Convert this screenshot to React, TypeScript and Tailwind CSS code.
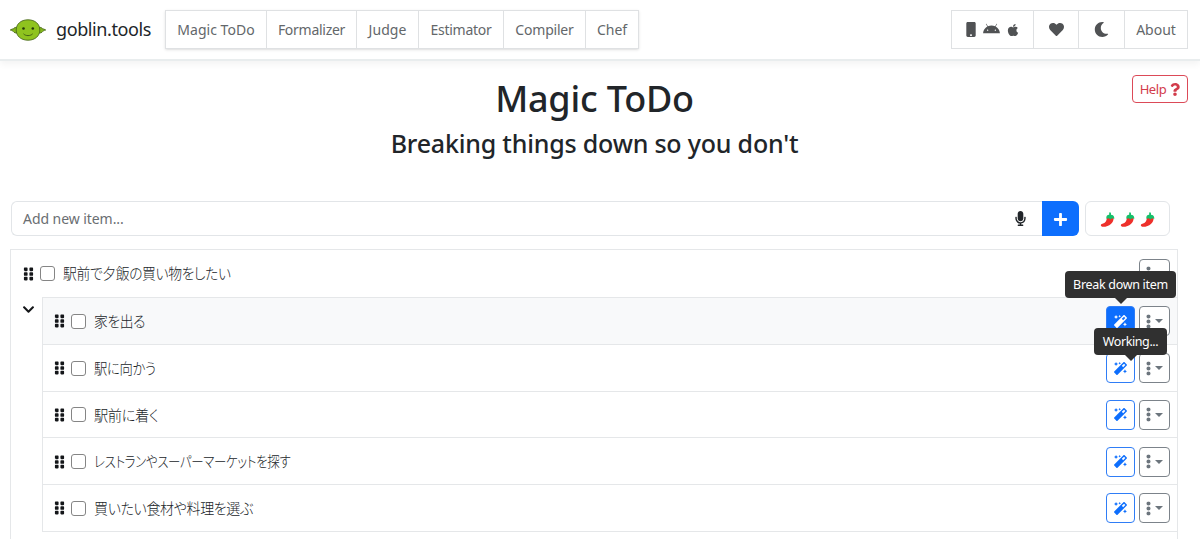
import type { ReactNode } from 'react'
import {
  FaApple,
  FaChevronDown,
  FaEllipsisV,
  FaGripVertical,
  FaHeart,
  FaMagic,
  FaMicrophone,
  FaMobile,
  FaMoon,
  FaPlus,
  FaQuestion
} from 'react-icons/fa'
import { FaAndroid } from 'react-icons/fa6'

const navItems = [
  { label: 'Magic ToDo', width: 'w-[101px]', text: 'tracking-[0.03px]' },
  { label: 'Formalizer', width: 'w-[90px]', text: 'tracking-[-0.27px]' },
  { label: 'Judge', width: 'w-[62px]', text: 'tracking-[0.1px]' },
  { label: 'Estimator', width: 'w-[85px]', text: 'tracking-[-0.27px]' },
  { label: 'Compiler', width: 'w-[82px]', text: 'tracking-[-0.2px]' },
  { label: 'Chef', width: 'w-[52px]', text: 'tracking-[-0.1px]' }
]

const steps = [
  { text: '家を出る', fit: 'scale-x-[0.92]' },
  { text: '駅に向かう', fit: 'scale-x-[0.89]' },
  { text: '駅前に着く', fit: 'scale-x-[0.95]' },
  { text: 'レストランやスーパーマーケットを探す', fit: 'scale-x-[0.83]' },
  { text: '買いたい食材や料理を選ぶ', fit: 'scale-x-[0.935]' }
]

function GoblinLogo() {
  return (
    <svg viewBox="0 0 36 22" className="w-9 h-[22px]" stroke="#4b6a1c" strokeWidth="0.9">
      <path d="M7 9C5.400 8 4.200 8.300 3.900 9.700 2.600 9.900 1.300 10.200.3 11c1.700.4 2.600.9 3.700 2.200 1.200 1 2.600.9 3.600.3z" fill="#83b81a" />
      <path d="M29 9c1.600-1 2.800-.7 3.100.7 1.300.2 2.600.5 3.600 1.300-1.700.4-2.600.9-3.700 2.200-1.200 1-2.600.9-3.600.3z" fill="#83b81a" />
      <path d="M18 .8c7.200 0 11.800 4.300 11.800 10.200S25.200 21.200 18 21.200 6.200 16.900 6.200 11 10.800.8 18 .8z" fill="#8fc31f" />
      <circle cx="13.500" cy="9.500" r="1.300" fill="#26380b" stroke="none" />
      <circle cx="22.800" cy="9.500" r="1.300" fill="#26380b" stroke="none" />
      <path d="M13.500 14.800c2 2.400 7 2.400 9.200 0" fill="none" stroke="#3d5713" />
    </svg>
  )
}

function Pepper() {
  return (
    <svg viewBox="0 0 16 16" className="w-[15px] h-[15px]">
      <path d="M7.400 6h7.100c.3 5.100-4.300 9.700-11.200 9.700-1.400 0-2.400-.6-2.400-1.600 0-.9.700-1.400 1.700-1.600C5.800 11.700 7 9.700 7.400 6z" fill="#ee312b" />
      <path d="M9.700 3c.4-.8.300-1.500-.2-2.100l1.500-.7c.8.900 1 1.900.6 2.800 2.400.1 3.700 1.700 3.700 4.100l-2.300-.5-1.800 1.200-2-1.200-2.400.7C6.400 4.600 7.600 3.100 9.700 3z" fill="#14c06a" />
    </svg>
  )
}

function NavCell({ className, children }: { className: string; children: ReactNode }) {
  return (
    <button
      className={`flex shrink-0 items-center justify-center h-full border-r border-[#dfe1e3] last:border-r-0 text-[#63676a] whitespace-nowrap ${className}`}
    >
      {children}
    </button>
  )
}

function Tooltip({ className, children }: { className: string; children: ReactNode }) {
  return (
    <div className={`absolute z-10 h-[27px] flex items-center justify-center bg-[#303030] rounded text-white text-[12.5px] whitespace-nowrap ${className}`}>
      {children}
      <span className="absolute top-full border-x-[6px] border-t-[6px] border-x-transparent border-t-[#303030]" />
    </div>
  )
}

function MoreButton() {
  return (
    <button className="w-[31px] h-[30px] flex items-center justify-center gap-[4px] bg-white border border-[#7c838a] rounded text-[#6c757d]">
      <FaEllipsisV className="w-[5px] h-[13px] scale-110" />
      <span className="border-x-4 border-t-4 border-x-transparent border-t-[#6c757d]" />
    </button>
  )
}

function ItemLabel({ text, fit }: { text: string; fit: string }) {
  return (
    <>
      <FaGripVertical className="w-[11px] h-[14px] shrink-0 text-[#141619] scale-105" />
      <span className="ml-[6px] w-[15px] h-[15px] shrink-0 bg-white border border-[#858585] rounded-[3px]" />
      <span
        className={`ml-2 text-[15px] text-[#212529] font-light tracking-[-0.4px] origin-left font-['Noto_Sans_CJK_JP',sans-serif] [font-feature-settings:'palt'] whitespace-nowrap ${fit}`}
      >
        {text}
      </span>
    </>
  )
}

export default function App() {
  return (
    <div className="w-full h-[539px] overflow-hidden bg-white text-[#212529] font-['Noto_Sans','Open_Sans',sans-serif]">
      {/* Navbar */}
      <header className="flex items-center h-[61px] pl-[10px] pr-3 border-b-2 border-[#e9edee] shadow-[0_3px_7px_rgba(0,0,0,0.05)]">
        <GoblinLogo />
        <span className="ml-[10px] w-[95px] -mt-px text-[18px] tracking-[-0.4px] whitespace-nowrap">goblin.tools</span>
        <nav className="ml-[14px] flex w-[474px] h-[39px] border border-[#dfe1e3] shadow-sm text-[14px]">
          {navItems.map((item) => (
            <NavCell key={item.label} className={`${item.width} ${item.text}`}>
              {item.label}
            </NavCell>
          ))}
        </nav>
        <nav className="ml-auto flex w-[237px] h-[39px] border border-[#dfe1e3] text-[14px]">
          <NavCell className="w-[82px] gap-[7px]">
            <FaMobile className="w-[10px] h-[15px] text-[#505254]" />
            <FaAndroid className="w-[17px] h-[15px] text-[#505254]" />
            <FaApple className="w-[12px] h-[14px] text-[#505254]" />
          </NavCell>
          <NavCell className="w-[45px]">
            <FaHeart className="w-[15px] h-[15px] text-[#505254]" />
          </NavCell>
          <NavCell className="w-[46px]">
            <FaMoon className="w-[15px] h-[15px] text-[#505254]" />
          </NavCell>
          <NavCell className="w-[62px]">About</NavCell>
        </nav>
      </header>

      {/* Page heading */}
      <section className="relative h-[140px] pr-[11px] flex flex-col items-center">
        <h1 className="mt-[15px] h-[46px] leading-[46px] text-[36px] font-medium tracking-[-0.2px] whitespace-nowrap">Magic ToDo</h1>
        <h2 className="mt-[3px] h-[36px] leading-[36px] text-[25px] font-medium tracking-[-0.2px] whitespace-nowrap">
          Breaking things down so you don't
        </h2>
        <button className="absolute right-3 top-[14px] w-[56px] h-[28px] pt-px flex items-center justify-center gap-1 border border-[#dc4a58] rounded text-[13px] text-[#d23c4b]">
          <span className="tracking-[-0.4px]">Help</span>
          <FaQuestion className="w-[10px] h-[13px]" />
        </button>
      </section>

      {/* New item */}
      <section className="flex ml-[11px] h-[35px]">
        <div className="flex flex-1 items-center pl-[11px] pr-[16px] border border-r-0 border-[#e2e5e8] rounded-l-md">
          <span className="text-[14px] tracking-[-0.06px] text-[#6a6e72]">Add new item...</span>
          <FaMicrophone className="ml-auto w-[11px] h-[15px]" />
        </div>
        <button className="w-[37px] pr-px pt-px flex items-center justify-center bg-[#0d6efd] rounded-r-md text-white">
          <FaPlus className="w-[15px] h-[15px]" />
        </button>
        <button className="ml-[6px] mr-[30px] w-[85px] pt-px flex items-center justify-center gap-[5px] border border-[#e2e5e8] rounded-md">
          <Pepper />
          <Pepper />
          <Pepper />
        </button>
      </section>

      {/* Task list */}
      <section className="mt-[13px] ml-[10px] mr-[22px] h-[310px] border border-[#e5e7e9]">
        <div className="flex items-center h-[47px] pl-[12px] pr-[7px]">
          <ItemLabel text="駅前で夕飯の買い物をしたい" fit="scale-x-[0.92]" />
          <div className="ml-auto">
            <MoreButton />
          </div>
        </div>
        <div className="flex">
          <div className="w-[31px] pt-[6px] flex justify-center pl-[3px]">
            <FaChevronDown className="w-[13px] h-[13px] text-[#141619]" />
          </div>
          <div className="flex-1 border-l border-t border-[#e5e7e9]">
            {steps.map((step, index) => (
              <div
                key={step.text}
                className={`flex items-center h-[46.75px] pl-[11px] pt-px pr-[7px] border-b border-[#e5e7e9] ${index === 0 ? 'bg-[#f8f9fa]' : 'bg-white'}`}
              >
                <ItemLabel text={step.text} fit={step.fit} />
                <div className="relative ml-auto flex gap-1">
                  <button
                    className={`w-[29px] h-[30px] flex items-center justify-center border border-[#2f7df6] rounded ${
                      index === 0 ? 'bg-[#0d6efd] text-white' : 'bg-white text-[#0d6efd]'
                    }`}
                  >
                    <FaMagic className="w-[13px] h-[13px]" />
                  </button>
                  <MoreButton />
                  {index === 0 && (
                    <>
                      <Tooltip className="left-[-41px] top-[-35px] w-[111px] tracking-[-0.3px]">Break down item</Tooltip>
                      <Tooltip className="left-[-12px] top-[22px] w-[73px] tracking-[-0.4px]">Working...</Tooltip>
                    </>
                  )}
                </div>
              </div>
            ))}
          </div>
        </div>
      </section>
    </div>
  )
}
